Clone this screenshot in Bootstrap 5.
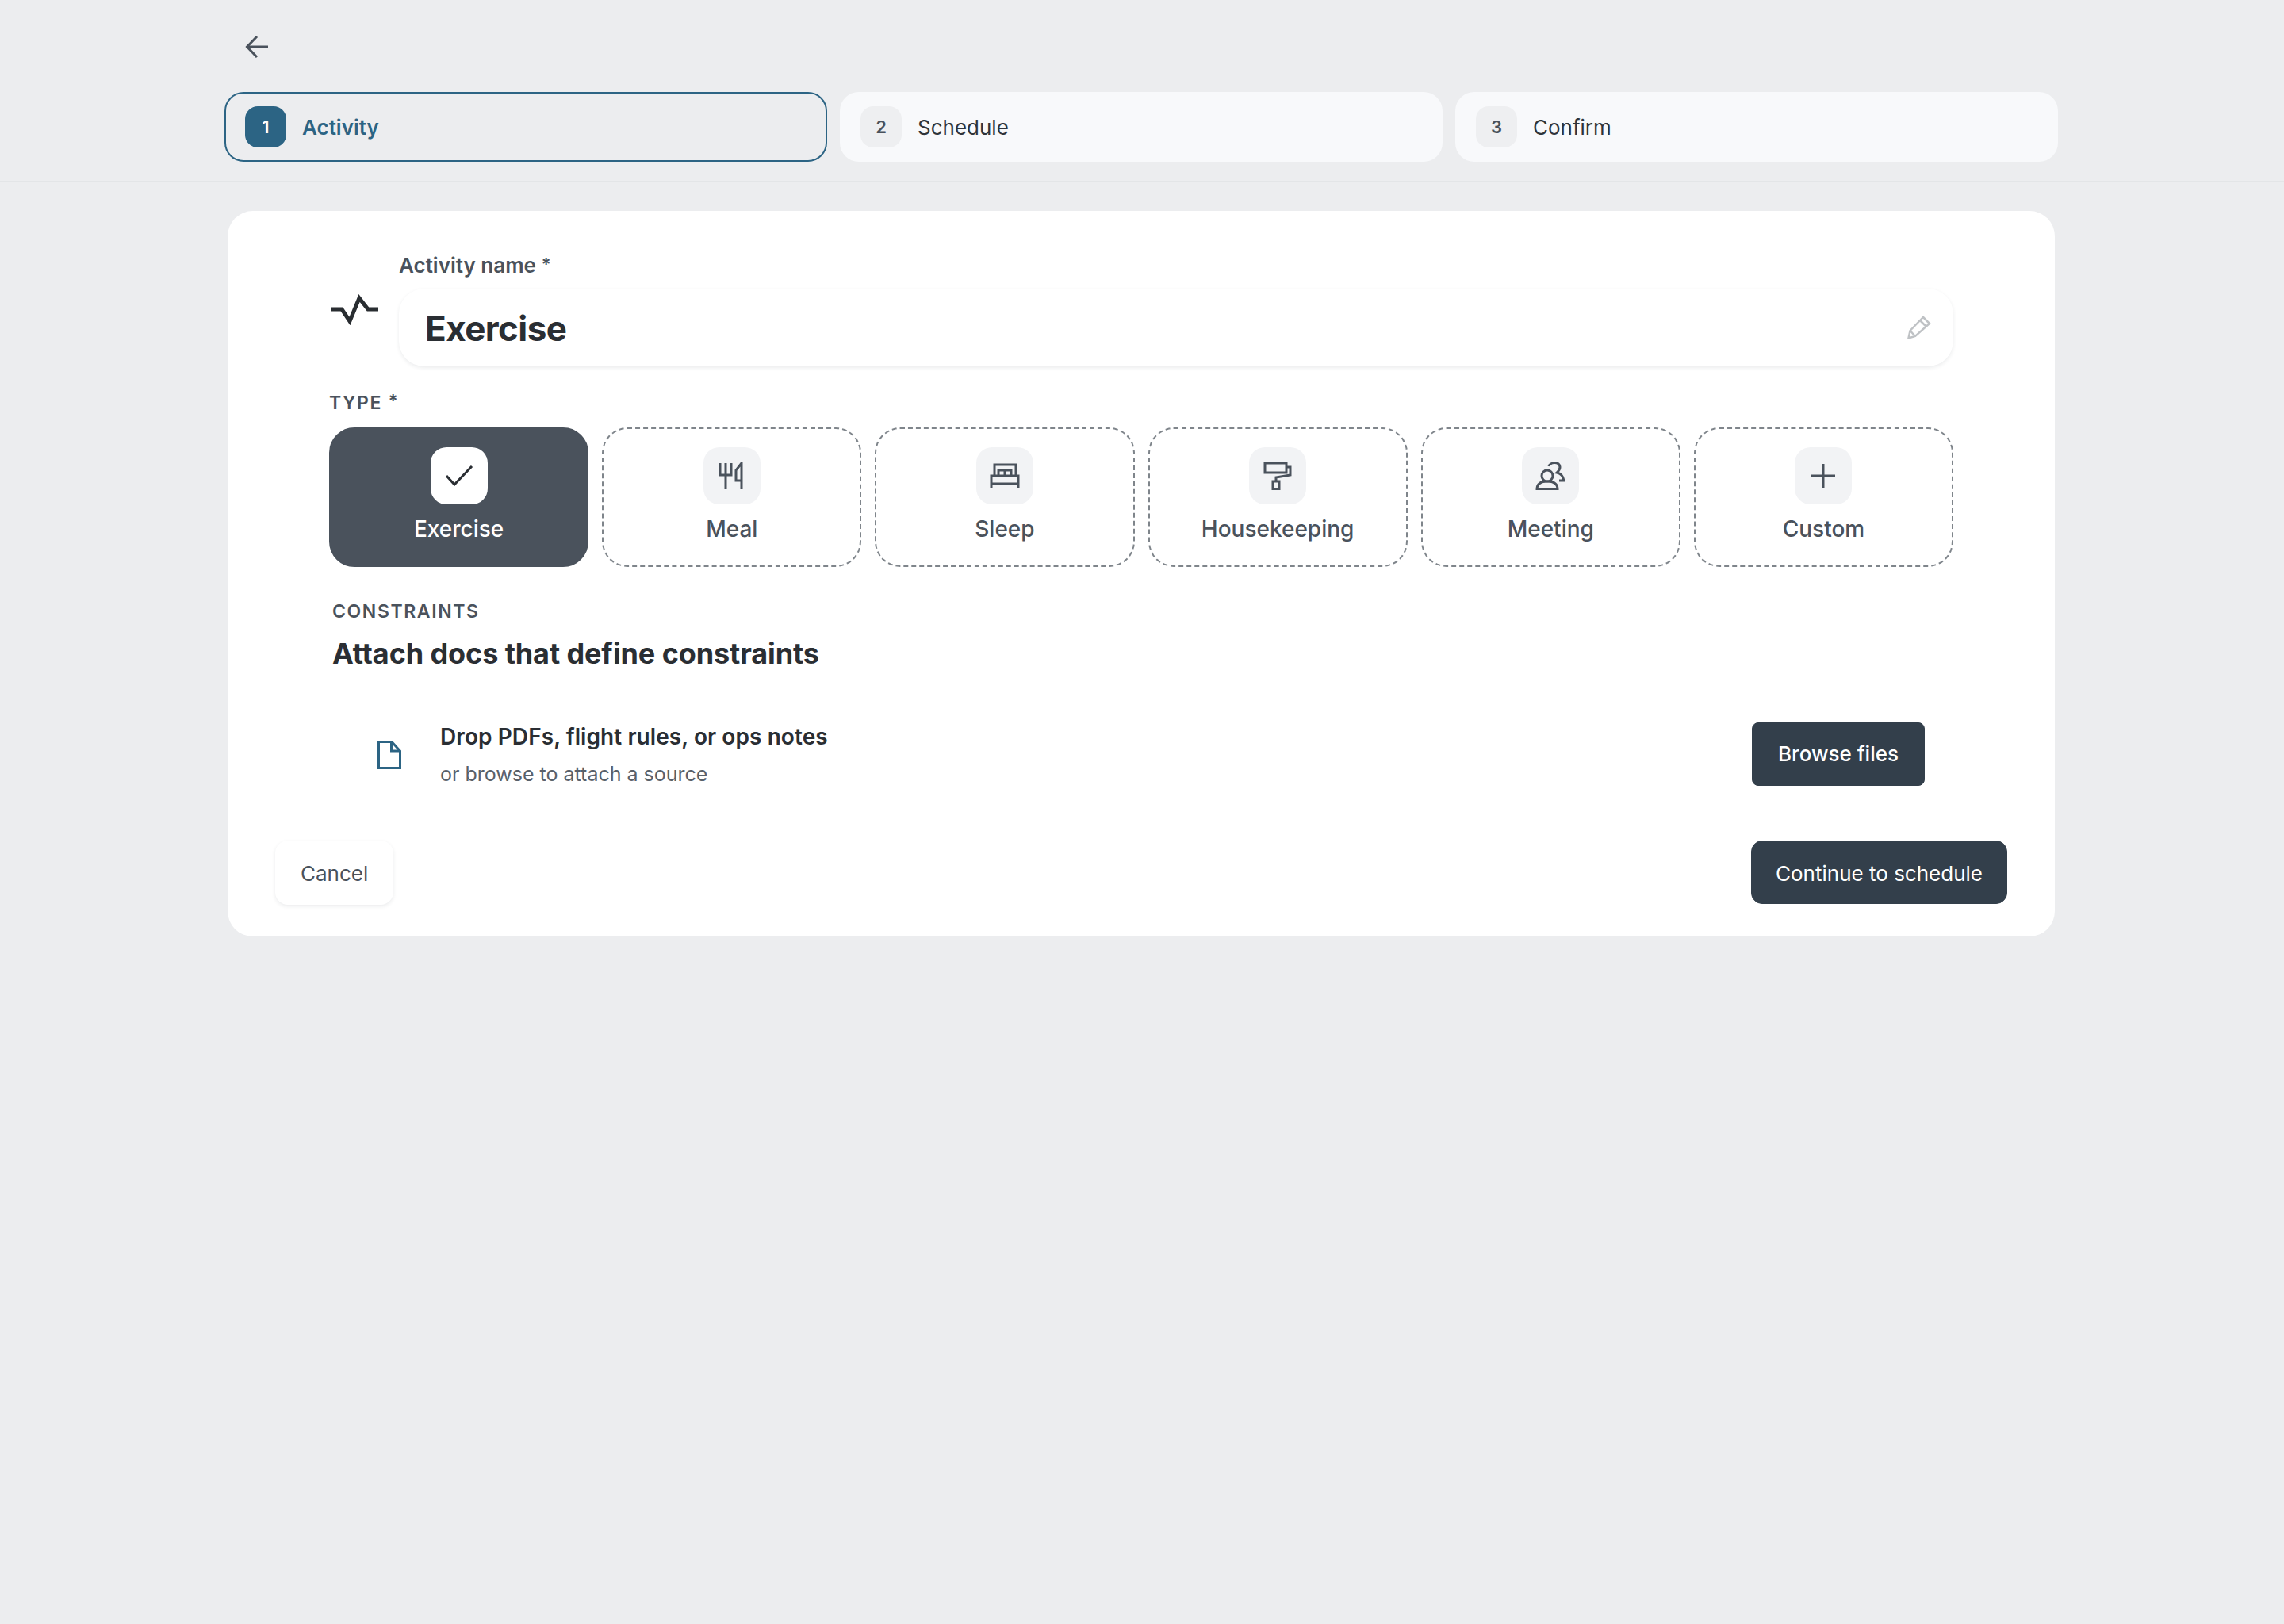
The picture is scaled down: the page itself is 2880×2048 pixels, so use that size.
<!DOCTYPE html>
<html lang="en">

<head>
    <meta charset="UTF-8">
    <meta name="viewport" content="width=device-width, initial-scale=1.0">
    <title>New activity</title>
    <link href="https://cdn.jsdelivr.net/npm/bootstrap@5.3.0/dist/css/bootstrap.min.css" rel="stylesheet">
    <style>
        body {
            background-color: #ecedef;
            font-family: "Inter", "Liberation Sans", sans-serif;
            color: #2a2e33;
        }

        svg {
            display: block;
            fill: none;
            stroke-linecap: butt;
            stroke-linejoin: miter;
        }

        .top-area {
            padding: 0 285px 24px 283px;
            border-bottom: 2px solid #e3e5e7;
        }

        .back-btn {
            height: 116px;
            padding: 45px 0 0 26px;
        }

        .step-row {
            gap: 16px;
        }

        .step-item {
            flex: 1 1 0;
            height: 88px;
            padding: 0 24px;
            gap: 20px;
            border: 2px solid transparent;
            border-radius: 24px;
            background: #f8f9fb;
            font-size: 26px;
            color: #2f343a;
        }

        .step-item.is-current {
            background: transparent;
            border-color: #2c6484;
            color: #2c6484;
            font-weight: 600;
        }

        .step-num {
            width: 52px;
            height: 52px;
            border-radius: 16px;
            background: #eeeff1;
            color: #4a525c;
            font-size: 22px;
            font-weight: 600;
        }

        .is-current .step-num {
            background: #2c6484;
            color: #fff;
        }

        .main-area {
            padding: 36px 285px 0 283px;
        }

        .form-sheet {
            margin: 0 4px;
            padding: 0 60px 40px;
            border: 0;
            border-radius: 32px;
            background: #fff;
        }

        .form-zone {
            padding: 0 68px;
        }

        .name-row {
            padding-top: 52px;
        }

        .pulse-col {
            width: 88px;
            padding-left: 3px;
        }

        .field-label {
            display: block;
            height: 30px;
            margin: 0 0 16px;
            font-size: 26px;
            line-height: 30px;
            font-weight: 600;
            color: #4a525c;
        }

        .field-box {
            height: 98px;
            padding: 0 28px 0 33px;
            border-radius: 32px;
            background: #fff;
            box-shadow: 0 2px 5px rgba(30, 40, 50, .09);
        }

        .field-input {
            padding: 2px 0 0;
            font-size: 44px;
            font-weight: 700;
            color: #2a2e33;
            background: transparent;
            border: 0;
            outline: 0;
            letter-spacing: -.6px;
        }

        .over-label {
            height: 28px;
            font-size: 23px;
            line-height: 28px;
            font-weight: 600;
            letter-spacing: 1.6px;
            color: #4a525c;
        }

        .type-label {
            margin-top: 29px;
        }

        .star-mark {
            font-size: 22px;
            font-weight: 700;
            vertical-align: 3px;
            letter-spacing: 0;
        }

        .type-row {
            gap: 17px;
            margin-top: 20px;
        }

        .type-tile {
            flex: 1 1 0;
            height: 176px;
            padding-top: 23px;
            border: 2px dashed #7f858b;
            border-radius: 32px;
            background: #fff;
            font-size: 28px;
            font-weight: 500;
            color: #4a525c;
        }

        .type-tile.is-picked {
            background: #4a525c;
            border: 2px solid #4a525c;
            color: #fff;
        }

        .type-icon {
            width: 72px;
            height: 72px;
            border-radius: 20px;
            background: #f2f3f5;
            stroke: #4a525c;
        }

        .is-picked .type-icon {
            background: #fff;
            stroke: #2a2e33;
        }

        .type-name {
            margin-top: 14px;
            line-height: 34px;
        }

        .constraint-head {
            margin: 42px 0 0 4px;
        }

        .constraint-title {
            margin: 17px 0 0;
            font-size: 36px;
            line-height: 44px;
            font-weight: 700;
            letter-spacing: -.1px;
            color: #2a2e33;
        }

        .drop-area {
            padding: 64px 36px 67px;
        }

        .doc-slot {
            width: 80px;
            margin-right: 24px;
        }

        .drop-title {
            font-size: 28px;
            line-height: 38px;
            font-weight: 600;
            letter-spacing: .08px;
            color: #2a2e33;
        }

        .drop-sub {
            margin-top: 11px;
            font-size: 25px;
            line-height: 34px;
            color: #59616a;
        }

        .dark-btn {
            --bs-btn-bg: #333f4b;
            --bs-btn-color: #fff;
            --bs-btn-border-color: #333f4b;
            --bs-btn-font-size: 26px;
            --bs-btn-font-weight: 500;
            height: 80px;
            padding: 0 32px;
            border-radius: 14px;
        }

        .browse-btn {
            margin-bottom: 2px;
            border-radius: 8px;
        }

        .next-btn {
            --bs-btn-font-weight: 400;
            padding: 2px 30px 0;
        }

        .cancel-btn {
            --bs-btn-bg: #fff;
            --bs-btn-color: #4a525c;
            --bs-btn-border-color: transparent;
            --bs-btn-font-size: 26px;
            height: 81px;
            padding: 2px 31px 0;
            border-radius: 16px;
            box-shadow: 0 2px 5px rgba(30, 40, 50, .09);
        }
    </style>
</head>

<body>
    <div class="top-area">
        <div class="back-btn">
            <svg width="30" height="28" viewBox="0 0 30 28" stroke="#4a525c" stroke-width="3">
                <path d="M29 14H3" />
                <path d="M15 1 2.5 14 15 27" />
            </svg>
        </div>
        <div class="step-row d-flex">
            <div class="step-item is-current d-flex align-items-center">
                <span class="step-num d-flex align-items-center justify-content-center">1</span>
                <span>Activity</span>
            </div>
            <div class="step-item d-flex align-items-center">
                <span class="step-num d-flex align-items-center justify-content-center">2</span>
                <span>Schedule</span>
            </div>
            <div class="step-item d-flex align-items-center">
                <span class="step-num d-flex align-items-center justify-content-center">3</span>
                <span>Confirm</span>
            </div>
        </div>
    </div>

    <div class="main-area">
        <div class="card form-sheet">
            <div class="form-zone">
                <div class="name-row d-flex align-items-center">
                    <div class="pulse-col flex-shrink-0">
                        <svg width="60" height="40" viewBox="0 0 60 40" stroke="#292d31" stroke-width="5">
                            <path d="M0 20H13L23 35 35 6 46 20H59" />
                        </svg>
                    </div>
                    <div class="flex-grow-1">
                        <label class="field-label" for="activityName">Activity name <span class="star-mark">*</span></label>
                        <div class="field-box d-flex align-items-center justify-content-between">
                            <input class="field-input flex-grow-1" id="activityName" type="text" value="Exercise">
                            <svg width="30" height="30" viewBox="0 0 30 30" stroke="#bfc2c5" stroke-width="2.5">
                                <path d="M20 2 28 10 10 26 1.5 28.5 3.5 19Z" />
                                <path d="M16 6 24 14" />
                                <path d="M3.5 19 10 26" />
                            </svg>
                        </div>
                    </div>
                </div>

                <div class="over-label type-label">TYPE <span class="star-mark">*</span></div>
                <div class="type-row d-flex">
                    <div class="type-tile is-picked d-flex flex-column align-items-center">
                        <div class="type-icon d-flex align-items-center justify-content-center">
                            <svg width="36" height="26" viewBox="0 0 36 26" stroke-width="3">
                                <path d="M2 13 12 24 34 1" />
                            </svg>
                        </div>
                        <div class="type-name">Exercise</div>
                    </div>
                    <div class="type-tile d-flex flex-column align-items-center">
                        <div class="type-icon d-flex align-items-center justify-content-center">
                            <svg width="36" height="36" viewBox="0 0 36 36" stroke-width="3">
                                <path d="M3 2V17H17V2M10 2V35" />
                                <path d="M30 35V2L23 11V24H30" />
                            </svg>
                        </div>
                        <div class="type-name">Meal</div>
                    </div>
                    <div class="type-tile d-flex flex-column align-items-center">
                        <div class="type-icon d-flex align-items-center justify-content-center">
                            <svg width="38" height="32" viewBox="0 0 38 32" stroke-width="3">
                                <path d="M6 16V2H33V16" />
                                <path d="M11 16V9H27V16M19 9V16" />
                                <path d="M2 32V16H36V32M2 26H36" />
                            </svg>
                        </div>
                        <div class="type-name">Sleep</div>
                    </div>
                    <div class="type-tile d-flex flex-column align-items-center">
                        <div class="type-icon d-flex align-items-center justify-content-center">
                            <svg width="36" height="36" viewBox="0 0 36 36" stroke-width="3">
                                <rect x="2" y="2" width="27" height="12" />
                                <path d="M29 7H34V17L16 20V25" />
                                <rect x="12" y="25" width="8" height="10" />
                            </svg>
                        </div>
                        <div class="type-name">Housekeeping</div>
                    </div>
                    <div class="type-tile d-flex flex-column align-items-center">
                        <div class="type-icon d-flex align-items-center justify-content-center">
                            <svg width="38" height="36" viewBox="0 0 38 36" stroke-width="3">
                                <circle cx="15" cy="18" r="7" />
                                <path d="M2 35C2 28 7 25 15 25S28 28 28 35Z" />
                                <path d="M17 6C18 1 30 -1 31 7 31 11 28 13 27 14 32 15 35 18 36 24H30" />
                            </svg>
                        </div>
                        <div class="type-name">Meeting</div>
                    </div>
                    <div class="type-tile d-flex flex-column align-items-center">
                        <div class="type-icon d-flex align-items-center justify-content-center">
                            <svg width="30" height="30" viewBox="0 0 30 30" stroke-width="3">
                                <path d="M15 0V30M0 15H30" />
                            </svg>
                        </div>
                        <div class="type-name">Custom</div>
                    </div>
                </div>

                <div class="constraint-head">
                    <div class="over-label">CONSTRAINTS</div>
                    <h2 class="constraint-title">Attach docs that define constraints</h2>
                </div>

                <div class="drop-area d-flex align-items-center">
                    <div class="doc-slot d-flex justify-content-center flex-shrink-0">
                        <svg width="30" height="36" viewBox="0 0 30 36" stroke="#2c6484" stroke-width="3">
                            <path d="M1.5 1.5H18L28.5 13V34.5H1.5Z" />
                            <path d="M17.5 2V13H28" />
                        </svg>
                    </div>
                    <div class="flex-grow-1">
                        <div class="drop-title">Drop PDFs, flight rules, or ops notes</div>
                        <div class="drop-sub">or browse to attach a source</div>
                    </div>
                    <button class="btn dark-btn browse-btn" type="button">Browse files</button>
                </div>
            </div>

            <div class="d-flex justify-content-between">
                <button class="btn cancel-btn" type="button">Cancel</button>
                <button class="btn dark-btn next-btn" type="button">Continue to schedule</button>
            </div>
        </div>
    </div>

    <script src="https://cdn.jsdelivr.net/npm/bootstrap@5.3.0/dist/js/bootstrap.bundle.min.js"></script>
</body>

</html>
